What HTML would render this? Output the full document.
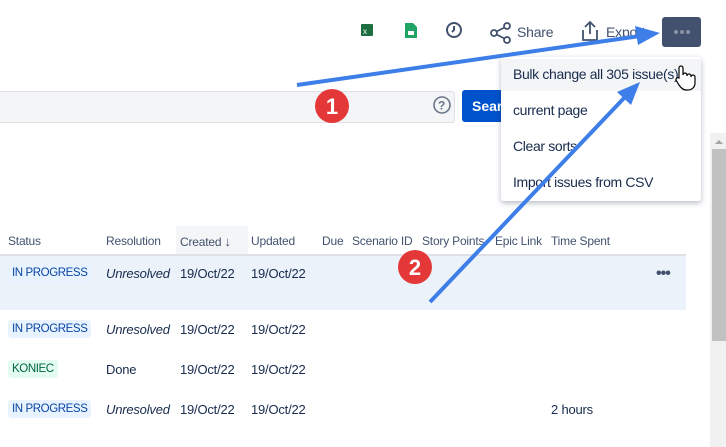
<!DOCTYPE html>
<html><head><meta charset="utf-8"><style>
body{margin:0;width:726px;height:447px;overflow:hidden;background:#fff;font-family:"Liberation Sans",sans-serif;color:#172b4d;position:relative}
.a{position:absolute}
.t{font-size:13px;white-space:nowrap;letter-spacing:-0.2px}
.lz{font-size:11.5px;padding:3px 4px;border-radius:3px;background:#e9f2ff;color:#0747a6;letter-spacing:-0.4px}
.m{font-size:14px;letter-spacing:-0.35px}
</style></head><body>
<svg class="a" style="left:360px;top:23px" width="14" height="14"><rect x="1" y="1" width="12" height="12" rx="1" fill="#1d6f42"/><text x="3" y="11" font-size="8" fill="#fff" font-family="Liberation Sans">x</text></svg>
<svg class="a" style="left:405px;top:23px" width="12" height="15"><path d="M0 0h8l4 4v11H0z" fill="#21a366"/><rect x="3" y="8" width="6" height="4" fill="#fff"/></svg>
<svg class="a" style="left:445px;top:21px" width="18" height="18"><circle cx="9" cy="9" r="7" fill="none" stroke="#42526e" stroke-width="2"/><path d="M9 5v4l-2 2" stroke="#42526e" stroke-width="2" fill="none"/></svg>
<svg class="a" style="left:490px;top:22px" width="22" height="22"><circle cx="4" cy="11" r="3" fill="none" stroke="#42526e" stroke-width="1.8"/><circle cx="17" cy="4" r="3" fill="none" stroke="#42526e" stroke-width="1.8"/><circle cx="17" cy="18" r="3" fill="none" stroke="#42526e" stroke-width="1.8"/><path d="M6.5 9.5l8-4M6.5 12.5l8 4" stroke="#42526e" stroke-width="1.8"/></svg>
<div class="a t" style="left:517px;top:24px;font-size:14px;color:#42526e">Share</div>
<svg class="a" style="left:581px;top:20px" width="18" height="22"><path d="M9 2v12M4 7l5-5 5 5M2 10v10h14V10" stroke="#42526e" stroke-width="1.8" fill="none"/></svg>
<div class="a t" style="left:606px;top:24px;font-size:14px;color:#42526e">Export</div>
<div class="a" style="left:662px;top:17px;width:39px;height:30px;background:#42526e;border-radius:3px"></div>
<div class="a" style="left:674px;top:30px;width:4px;height:4px;border-radius:2px;background:#8993a4;box-shadow:6px 0 #8993a4,12px 0 #8993a4"></div>
<div class="a" style="left:-2px;top:91px;width:455px;height:30px;background:#f4f5f7;border:1px solid #dfe1e6;border-radius:3px"></div>
<svg class="a" style="left:432px;top:95px" width="20" height="20"><circle cx="10" cy="10" r="8" fill="none" stroke="#6b778c" stroke-width="1.6"/><text x="6" y="14.5" font-size="12" font-weight="bold" fill="#6b778c" font-family="Liberation Sans">?</text></svg>
<div class="a" style="left:462px;top:90px;width:50px;height:32px;background:#0052cc;border-radius:3px;color:#fff;font-weight:bold;font-size:14px;line-height:32px;padding-left:10px;overflow:hidden">Search</div>
<div class="a" style="left:710px;top:133px;width:16px;height:314px;background:#f1f1f1"></div>
<div class="a" style="left:712px;top:149px;width:14px;height:192px;background:#c1c1c1"></div>
<svg class="a" style="left:712px;top:138px" width="14" height="8"><path d="M3 6l4-4 4 4z" fill="#a3a3a3"/></svg>
<div class="a" style="left:176px;top:226px;width:72px;height:28px;background:#f4f5f7"></div>
<div class="a t" style="top:234px;left:8px;font-size:12px;color:#42526e">Status</div>
<div class="a t" style="top:234px;left:106px;font-size:12px;color:#42526e">Resolution</div>
<div class="a t" style="top:234px;left:180px;font-size:12px;color:#42526e">Created <b style="font-size:13px">&#8595;</b></div>
<div class="a t" style="top:234px;left:251px;font-size:12px;color:#42526e">Updated</div>
<div class="a t" style="top:234px;left:322px;font-size:12px;color:#42526e">Due</div>
<div class="a t" style="top:234px;left:352px;font-size:12px;color:#42526e">Scenario ID</div>
<div class="a t" style="top:234px;left:422px;font-size:12px;color:#42526e">Story Points</div>
<div class="a t" style="top:234px;left:495px;font-size:12px;color:#42526e">Epic Link</div>
<div class="a t" style="top:234px;left:551px;font-size:12px;color:#42526e">Time Spent</div>
<div class="a" style="left:0;top:254px;width:686px;height:2px;background:#dfe1e6"></div>
<div class="a" style="left:0;top:256px;width:686px;height:54px;background:#ebf2fa"></div>
<div class="a t" style="left:656px;top:265px;font-size:16px;font-weight:bold;color:#42526e;letter-spacing:-1px">•••</div>

<div class="a lz" style="left:8px;top:264px">IN PROGRESS</div>
<div class="a t" style="left:106px;top:266px;font-style:italic">Unresolved</div>
<div class="a t" style="left:180px;top:266px">19/Oct/22</div><div class="a t" style="left:251px;top:266px">19/Oct/22</div>

<div class="a lz" style="left:8px;top:320px">IN PROGRESS</div>
<div class="a t" style="left:106px;top:322px;font-style:italic">Unresolved</div>
<div class="a t" style="left:180px;top:322px">19/Oct/22</div><div class="a t" style="left:251px;top:322px">19/Oct/22</div>

<div class="a lz" style="left:8px;top:360px;background:#e3fcef;color:#006644">KONIEC</div>
<div class="a t" style="left:106px;top:362px">Done</div>
<div class="a t" style="left:180px;top:362px">19/Oct/22</div><div class="a t" style="left:251px;top:362px">19/Oct/22</div>

<div class="a lz" style="left:8px;top:400px">IN PROGRESS</div>
<div class="a t" style="left:106px;top:402px;font-style:italic">Unresolved</div>
<div class="a t" style="left:180px;top:402px">19/Oct/22</div><div class="a t" style="left:251px;top:402px">19/Oct/22</div>
<div class="a t" style="left:551px;top:402px">2 hours</div>

<div class="a" style="left:501px;top:57px;width:200px;height:144px;background:#fff;border-radius:3px;box-shadow:0 2px 6px rgba(9,30,66,.3)"></div>
<div class="a" style="left:501px;top:59px;width:200px;height:32px;background:#f4f5f7"></div>
<div class="a t m" style="left:513px;top:66px">Bulk change all 305 issue(s)</div>
<div class="a t m" style="left:513px;top:102px">current page</div>
<div class="a t m" style="left:513px;top:138px">Clear sorts</div>
<div class="a t m" style="left:513px;top:174px">Import issues from CSV</div>
<svg class="a" style="left:674px;top:64px" width="22" height="28"><path d="M5 14V4a2 2 0 014 0v7a2 2 0 014 0v1a2 2 0 014 0v1a2 2 0 014 0v6c0 4-3 7-7 7h-2c-3 0-5-2-7-5l-3-5a2 2 0 013-2z" fill="#fff" stroke="#000" stroke-width="1.2"/></svg>

<svg class="a" style="left:0;top:0" width="726" height="447">
<path d="M297 85L640 36" stroke="#3d7ee8" stroke-width="4"/>
<path d="M660 33L635 26 638 45z" fill="#3d7ee8"/>
<path d="M430 302L626 96" stroke="#3d7ee8" stroke-width="4"/>
<path d="M640 82L617 92 631 105z" fill="#3d7ee8"/>
<circle cx="332" cy="106" r="17" fill="#e43838"/>
<text x="332" y="114" font-size="22" font-weight="bold" fill="#fff" text-anchor="middle" font-family="Liberation Sans">1</text>
<circle cx="415" cy="267" r="17" fill="#e43838"/>
<text x="415" y="275" font-size="22" font-weight="bold" fill="#fff" text-anchor="middle" font-family="Liberation Sans">2</text>
</svg>
</body></html>
